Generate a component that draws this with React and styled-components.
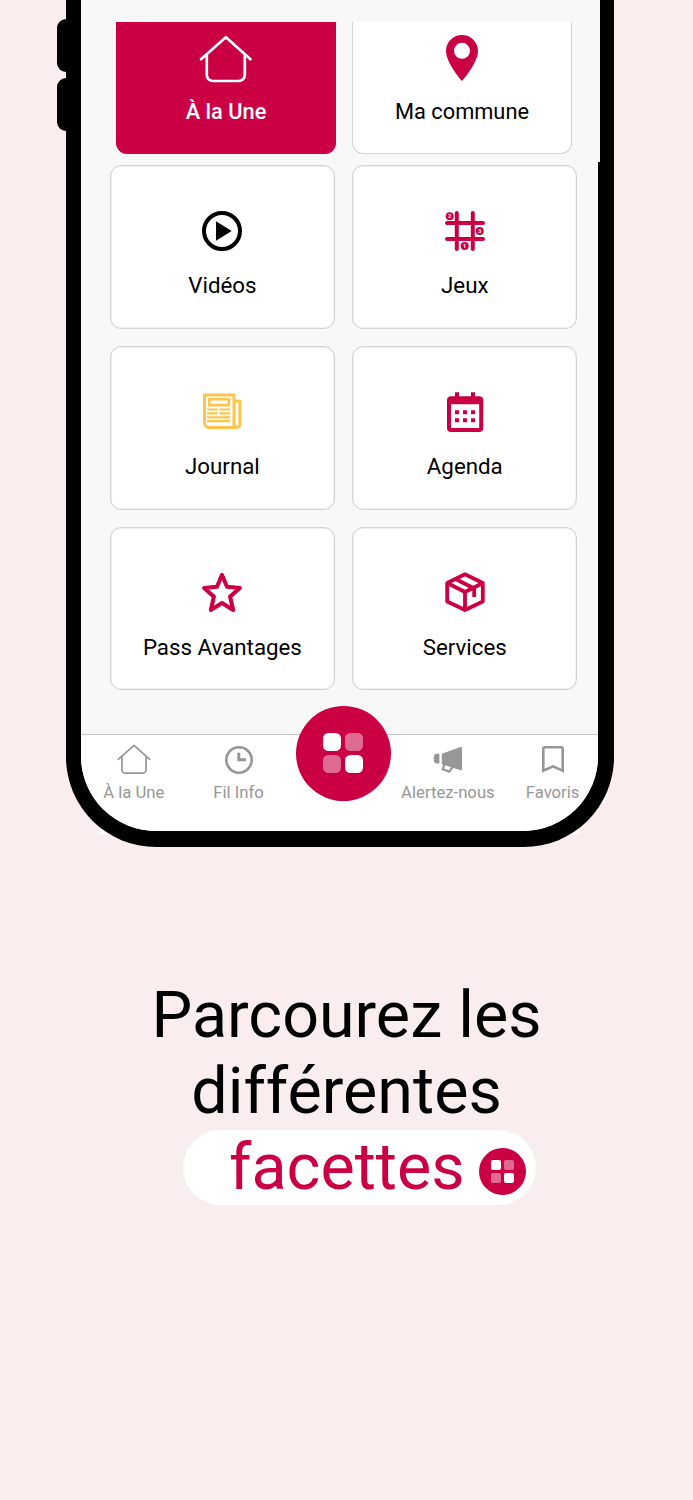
import styled, { createGlobalStyle, css } from "styled-components";

const RED = "#cb0044";
const GREY = "#979797";

const GlobalStyle = createGlobalStyle`
    body {
        margin: 0;
        background: #f9eeed;
        font-family: Roboto, sans-serif;
    }
`

const Page = styled.main`
    position: relative;
    isolation: isolate;
    width: 693px;
    height: 1500px;
    overflow: hidden;
    background: #f9eeed;
    color: #000;
`

const Phone = styled.div`
    position: relative;
    box-sizing: border-box;
    width: 548px;
    height: 846.5px;
    margin-left: 65.5px;
    padding: 0 15.5px 15.5px;
    background: #000;
    border-radius: 0 0 90px 90px;
`

const SideButton = styled.div`
    position: absolute;
    left: -8.5px;
    top: ${({ $top }) => $top}px;
    width: 20px;
    height: 53px;
    border-radius: 9px;
    background: #000;
`

const Backing = styled.div`
    position: absolute;
    z-index: -1;
    left: 33.5px;
    top: 700px;
    width: ${({ $width }) => $width}px;
    height: ${({ $height }) => $height}px;
    background: #fff;
`

const Screen = styled.div`
    display: flex;
    flex-direction: column;
    height: 831px;
    background: #f8f8f8;
    border-radius: 0 0 75px 75px;
`

const TopRow = styled.div`
    display: flex;
    gap: 16px;
    box-sizing: border-box;
    flex: 0 0 162px;
    margin-right: -1.5px;
    padding: 22px 0 0 35px;
    background: #f8f8f8;
`

const Grid = styled.div`
    display: grid;
    grid-template-columns: 225px 225px;
    grid-auto-rows: 163.4px;
    gap: 17.4px 17.4px;
    flex: 1;
    padding: 3.4px 0 0 28.9px;
`

const Card = styled.div`
    display: flex;
    flex-direction: column;
    align-items: center;
    box-sizing: border-box;
    padding-top: 44.5px;
    background: #fff;
    border: 1px solid #d3d3d3;
    box-shadow: inset 0 0 0 0.5px #e4e4e4;
    border-radius: 11px;

    ${({ $cut }) => $cut && css`
        width: 220px;
        height: 132px;
        padding-top: 13px;
        border-top: 0;
        box-shadow: none;
        border-radius: 0 0 11px 11px;
    `}

    ${({ $active }) => $active && css`
        background: ${RED};
        border-color: ${RED};
        color: #fff;
    `}
`

const IconSlot = styled.div`
    display: flex;
    justify-content: center;
    height: ${({ $height }) => $height || 40}px;
    flex-shrink: 0;
`

const Label = styled.span`
    margin-top: ${({ $top }) => $top || 20.2}px;
    font-size: ${({ $size }) => $size || 22.3}px;
    line-height: 28px;
    font-weight: ${({ $bold }) => ($bold ? 500 : 400)};
    white-space: nowrap;
`

const Nav = styled.nav`
    display: grid;
    grid-template-columns: repeat(5, 104.7px);
    box-sizing: border-box;
    height: 97px;
    padding-left: 0.5px;
    border-top: 1px solid #c6c6c6;
    border-radius: 0 0 75px 75px;
    background: #fff;
`

const NavItem = styled.div`
    display: flex;
    flex-direction: column;
    align-items: center;
    padding-top: 10px;
    color: ${GREY};
    font-size: 16.7px;
    line-height: 20px;
    white-space: nowrap;
`

const NavIcon = styled.div`
    display: flex;
    align-items: center;
    justify-content: center;
    height: 29px;
    margin-bottom: 9px;
`

const Fab = styled.div`
    display: grid;
    place-items: center;
    justify-self: center;
    width: ${({ $size }) => $size}px;
    height: ${({ $size }) => $size}px;
    border-radius: 50%;
    background: ${RED};
    margin-top: ${({ $top }) => $top}px;
`

const Dots = styled.div`
    display: grid;
    grid-template-columns: repeat(2, ${({ $dot }) => $dot}px);
    grid-auto-rows: ${({ $dot }) => $dot}px;
    gap: ${({ $gap }) => $gap}px;
`

const Dot = styled.i`
    border-radius: ${({ $round }) => $round}px;
    background: ${({ $pale }) => ($pale ? "#df6b94" : "#fff")};
`

const Heading = styled.h1`
    display: flex;
    flex-direction: column;
    align-items: center;
    margin: 130px 0 0;
    font-size: 64.6px;
    font-weight: 400;
    line-height: 76px;
`

const Pill = styled.span`
    display: flex;
    align-items: center;
    box-sizing: border-box;
    width: 353px;
    height: 75px;
    margin: 1px 0 0 26px;
    padding-left: 46px;
    gap: 14px;
    border-radius: 37.5px;
    background: #fff;
    color: ${RED};
`

const HomeIcon = ({ width, height }) => (
    <svg width={width} height={height} viewBox="0 0 54 48" fill="none" stroke="currentColor" strokeWidth="2.7" strokeLinecap="round" strokeLinejoin="round">
        <path d="M2 24.2 26.9 2.2 51.5 24.2" />
        <path d="M7.8 20v20a6 6 0 0 0 6 6h26a6 6 0 0 0 6-6v-20" />
    </svg>
)

const PinIcon = () => (
    <svg width="32" height="46" viewBox="0 0 32 46" fill={RED}>
        <path fillRule="evenodd" d="M16 0C7 0 0 7 0 16c0 12 16 30 16 30s16-18 16-30C32 7 25 0 16 0Zm0 7.8a8 8 0 1 1 0 16 8 8 0 0 1 0-16Z" />
    </svg>
)

const PlayIcon = () => (
    <svg width="40" height="40" viewBox="0 0 40 40">
        <circle cx="20" cy="20" r="18" fill="none" stroke="#000" strokeWidth="4" />
        <path d="M14 10.3 29.7 20 14 29.7Z" />
    </svg>
)

const BADGES = [[4.7, 5.3, "2"], [34.7, 20, "3"], [19.7, 35, "1"]];

const GamesIcon = () => (
    <svg width="40" height="40" viewBox="0 0 40 40">
        <path d="M11.8 2v36M27.8 2v36M2 12h36M2 28h36" fill="none" stroke={RED} strokeWidth="4" strokeLinecap="round" />
        {BADGES.map(([x, y, digit]) => (
            <g key={digit}>
                <circle cx={x} cy={y} r="4" fill={RED} />
                <text x={x} y={y + 2} fill="#fff" fontSize="5.6" fontWeight="700" textAnchor="middle">{digit}</text>
            </g>
        ))}
    </svg>
)

const NewsIcon = () => (
    <svg width="40" height="40" viewBox="0 0 40 40" fill="none" stroke="#ffc44d" strokeWidth="3">
        <path d="M29 35.5H7A4.5 4.5 0 0 1 2.500 31V3H32v29.500a2.900 2.900 0 0 0 5.800 0V9H32M29 35.500h5" strokeLinejoin="round" />
        <path d="M7.300 7.300h19.600v5.800H7.300Z" strokeWidth="2.600" />
        <path d="M5 17.500h23.200M5 21.400h23.200M5 25.300h23.200M5 29.200h23.200" strokeWidth="2.200" />
        <path d="M16.600 16v7.500" stroke="#fff" strokeWidth="1.800" />
    </svg>
)

const CalendarIcon = () => (
    <svg width="40" height="40" viewBox="0 0 40 40" fill={RED}>
        <path fillRule="evenodd" d="M6 4.300h28.200a4 4 0 0 1 4 4V36a4 4 0 0 1-4 4H6a4 4 0 0 1-4-4V8.300a4 4 0 0 1 4-4Zm0 8V36h28.200V12.300Z" />
        <path d="M10 .3h4v5h-4ZM26 .3h4v5h-4Z" />
        <path d="M10 18.300h4v4h-4ZM18 18.300h4v4h-4ZM26 18.300h4v4h-4ZM10 26.300h4v4h-4ZM18 26.300h4v4h-4ZM26 26.300h4v4h-4Z" />
    </svg>
)

const StarIcon = () => (
    <svg width="40" height="41" viewBox="0 0 40 41" fill="none" stroke={RED} strokeWidth="4.100" strokeLinejoin="round">
        <path d="m20 3 5 11.800 12.800 1.200-9.700 8.600 3 13.300-11.100-6.900-11.100 6.900 3-13.300L2.200 16 15 14.800Z" />
    </svg>
)

const BoxIcon = () => (
    <svg width="40" height="40" viewBox="0 0 40 40" fill="none" stroke={RED} strokeWidth="3.800" strokeLinejoin="round">
        <path d="M20 2.300 37.800 11v18.500L20 38 2.200 29.500V11Z" />
        <path d="m2.200 11 17.800 9 17.800-9M20 20v17.800" />
        <path d="m10.500 7 18.700 9.500V25" strokeLinejoin="miter" />
    </svg>
)

const ClockIcon = () => (
    <svg width="28" height="28" viewBox="0 0 28 28" fill="none" stroke={GREY}>
        <circle cx="14" cy="14" r="12.700" strokeWidth="2.600" />
        <path d="M13.800 6.700v7H21" strokeWidth="3" />
    </svg>
)

const MegaphoneIcon = () => (
    <svg width="30" height="28" viewBox="0 0 30 28" fill={GREY}>
        <path d="M6.400 7.700v9.800H3.500C1.600 17.500.7 15.500.7 12.600s.9-4.900 2.800-4.900Z" />
        <path d="M8.800 7.700 27.500 1.100q1.500-.4 1.500.7v21.400q0 1.400-1.500 1L8.800 18.300Z" />
        <path d="m11.500 18.500-1.900 4.700 6.800 2.400 3.300-4.800" fill="none" stroke={GREY} strokeWidth="2.200" strokeLinejoin="round" />
    </svg>
)

const BookmarkIcon = () => (
    <svg width="22" height="28" viewBox="0 0 22 28" fill="none" stroke={GREY} strokeWidth="2.600">
        <path d="M1.300 24.800V2.800q0-1.500 1.500-1.500h16.400q1.500 0 1.500 1.500v22L11 20.400Z" />
    </svg>
)

const FacetIcon = ({ size, top, dot, gap, round }) => (
    <Fab $size={size} $top={top}>
        <Dots $dot={dot} $gap={gap}>
            <Dot $round={round} />
            <Dot $round={round} $pale />
            <Dot $round={round} $pale />
            <Dot $round={round} />
        </Dots>
    </Fab>
)

const CARDS = [
    ["Vidéos", PlayIcon],
    ["Jeux", GamesIcon],
    ["Journal", NewsIcon],
    ["Agenda", CalendarIcon],
    ["Pass Avantages", StarIcon],
    ["Services", BoxIcon],
];

const App = () => {
    return (
        <Page>
            <GlobalStyle />
            <Phone>
                <Backing $width={481} $height={134} />
                <Backing $width={506} $height={103} />
                <SideButton $top={19} />
                <SideButton $top={78.4} />
                <Screen>
                    <TopRow>
                        <Card $cut $active>
                            <IconSlot $height={48}><HomeIcon width={54} height={48} /></IconSlot>
                            <Label $top={15} $size={21.8} $bold>À la Une</Label>
                        </Card>
                        <Card $cut>
                            <IconSlot $height={48}><PinIcon /></IconSlot>
                            <Label $top={15} $size={21.8}>Ma commune</Label>
                        </Card>
                    </TopRow>
                    <Grid>
                        {CARDS.map(([label, Icon]) => (
                            <Card key={label}>
                                <IconSlot><Icon /></IconSlot>
                                <Label>{label}</Label>
                            </Card>
                        ))}
                    </Grid>
                    <Nav>
                        <NavItem>
                            <NavIcon><HomeIcon width={34.3} height={30.5} /></NavIcon>
                            À la Une
                        </NavItem>
                        <NavItem>
                            <NavIcon><ClockIcon /></NavIcon>
                            Fil Info
                        </NavItem>
                        <FacetIcon size={95} top={-29.5} dot={18} gap={4} round={5.5} />
                        <NavItem>
                            <NavIcon><MegaphoneIcon /></NavIcon>
                            Alertez-nous
                        </NavItem>
                        <NavItem>
                            <NavIcon><BookmarkIcon /></NavIcon>
                            Favoris
                        </NavItem>
                    </Nav>
                </Screen>
            </Phone>
            <Heading>
                <span>Parcourez les</span>
                <span>différentes</span>
                <Pill>
                    facettes
                    <FacetIcon size={47.5} top={9} dot={10.5} gap={2.5} round={2} />
                </Pill>
            </Heading>
        </Page>
    )
}

export default App
